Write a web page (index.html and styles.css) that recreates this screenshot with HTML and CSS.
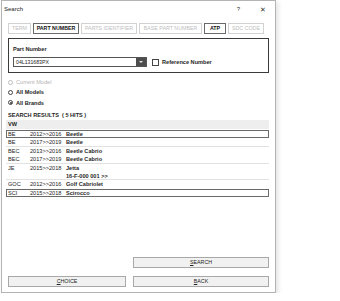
FILE: index.html
```html
<!DOCTYPE html>
<html lang="en">
<head>
    <meta charset="UTF-8">
    <title>Search</title>
    <link rel="stylesheet" href="styles.css">
</head>
<body>
    <div class="dialog">
        <div class="titlebar">
            <span class="title">Search</span>
            <span class="title-btn help">?</span>
            <span class="title-btn close">&#x2715;</span>
        </div>

        <div class="content">
            <div class="tabs">
                <div class="tab w-term">TERM</div>
                <div class="tab active w-pn">PART NUMBER</div>
                <div class="tab w-pi">PARTS IDENTIFIER</div>
                <div class="tab w-bpn">BASE PART NUMBER</div>
                <div class="tab active w-atp">ATP</div>
                <div class="tab w-sdc">SDC CODE</div>
            </div>

            <div class="group">
                <div class="group-label">Part Number</div>
                <div class="input-row">
                    <div class="combo">
                        <span class="combo-text">04L131683PX</span>
                        <span class="combo-btn"></span>
                    </div>
                    <span class="checkbox"></span>
                    <span class="check-label">Reference Number</span>
                </div>
            </div>

            <div class="radios">
                <div class="radio disabled"><span class="dot"></span>Current Model</div>
                <div class="radio"><span class="dot"></span>All Models</div>
                <div class="radio"><span class="dot checked"></span>All Brands</div>
            </div>

            <div class="results-label">SEARCH RESULTS &nbsp;( 5 HITS )</div>

            <div class="results">
                <div class="brand">VW</div>
                <div class="rows">
                    <div class="row selected"><span>BE</span><span>2012&gt;&gt;2016</span><span>Beetle</span></div>
                    <div class="row group-end"><span>BE</span><span>2017&gt;&gt;2019</span><span>Beetle</span></div>
                    <div class="row"><span>BEC</span><span>2013&gt;&gt;2016</span><span>Beetle Cabrio</span></div>
                    <div class="row group-end"><span>BEC</span><span>2017&gt;&gt;2019</span><span>Beetle Cabrio</span></div>
                    <div class="row group-end"><span>JE</span><span>2015&gt;&gt;2018</span><span>Jetta<br>16-F-000 001 &gt;&gt;</span></div>
                    <div class="row"><span>GOC</span><span>2012&gt;&gt;2016</span><span>Golf Cabriolet</span></div>
                    <div class="row selected"><span>SCI</span><span>2015&gt;&gt;2018</span><span>Scirocco</span></div>
                </div>
            </div>

            <div class="buttons">
                <div class="button wide"><u>S</u>EARCH</div>
                <div class="button-row">
                    <div class="button"><u>C</u>HOICE</div>
                    <div class="button"><u>B</u>ACK</div>
                </div>
            </div>
        </div>
    </div>
</body>
</html>
```

FILE: styles.css
```css
body {
    margin: 0;
    background-color: #ffffff;
    font-family: "Liberation Sans", Arial, sans-serif;
    font-size: 5.6px;
    color: #1e1e1e;
}

.dialog {
    margin-left: 1px;
    width: 275px;
    height: 293px;
    box-sizing: border-box;
    border: 1px solid #b4b4b4;
    background-color: #ffffff;
    box-shadow: 2px 2px 5px rgba(0, 0, 0, 0.12);
    display: flex;
    flex-direction: column;
}

.titlebar {
    height: 22px;
    display: flex;
    align-items: flex-start;
    line-height: 17px;
    font-size: 6px;
}

.title {
    flex: 1;
    padding-left: 2px;
}

.title-btn {
    width: 25px;
    text-align: center;
    color: #333;
}

.close {
    width: 24px;
    font-size: 6.5px;
}

.content {
    flex: 1;
    padding: 0 6px 5px 6px;
    display: flex;
    flex-direction: column;
}

/* tabs */
.tabs {
    display: flex;
    gap: 2px;
    height: 11px;
}

.tab {
    box-sizing: border-box;
    border: 1px solid #d2d2d2;
    color: #bdbdbd;
    font-size: 5.3px;
    line-height: 9px;
    text-align: center;
    white-space: nowrap;
    overflow: hidden;
}

.tab.active {
    border-color: #6a6a6a;
    color: #111;
    font-weight: bold;
}

.w-term { width: 23px; }
.w-pn { width: 46px; }
.w-pi { width: 56px; }
.w-bpn { width: 63px; }
.w-atp { width: 22px; }
.w-sdc { width: 36px; }

/* part number group */
.group {
    margin-top: 4px;
    height: 35px;
    box-sizing: border-box;
    border: 1px solid #3a3a3a;
    padding: 6px 4px 0 4px;
}

.group-label {
    font-weight: bold;
    line-height: 8px;
}

.input-row {
    margin-top: 4px;
    display: flex;
    align-items: center;
    height: 10px;
}

.combo {
    width: 134px;
    height: 10px;
    box-sizing: border-box;
    border: 1px solid #555;
    display: flex;
}

.combo-text {
    flex: 1;
    padding-left: 2px;
    line-height: 8px;
    font-size: 5.2px;
}

.combo-btn {
    width: 10px;
    background-color: #4d4d4d;
    display: flex;
    align-items: center;
    justify-content: center;
}

.combo-btn::after {
    content: "";
    border-left: 2px solid transparent;
    border-right: 2px solid transparent;
    border-top: 2px solid #e6e6e6;
}

.checkbox {
    margin-left: 5px;
    width: 7px;
    height: 7px;
    box-sizing: border-box;
    border: 1px solid #444;
}

.check-label {
    margin-left: 3px;
    font-weight: bold;
}

/* radios */
.radios {
    margin-top: 4px;
}

.radio {
    height: 10.3px;
    display: flex;
    align-items: center;
    font-weight: bold;
}

.radio.disabled {
    color: #b4b4b4;
    font-weight: normal;
}

.dot {
    width: 5px;
    height: 5px;
    box-sizing: border-box;
    border: 1px solid #444;
    border-radius: 50%;
    margin-right: 3px;
    display: flex;
    align-items: center;
    justify-content: center;
}

.disabled .dot {
    border-color: #bbb;
}

.dot.checked::after {
    content: "";
    width: 2px;
    height: 2px;
    border-radius: 50%;
    background-color: #333;
}

.results-label {
    margin-top: 3px;
    line-height: 8px;
    font-weight: bold;
}

/* results table */
.results {
    margin-top: 1px;
    margin-left: -2px;
}

.brand {
    height: 9px;
    line-height: 9px;
    padding-left: 2px;
    background-color: #eeeeee;
    font-weight: bold;
}

.rows {
    margin-top: 1px;
}

.row {
    display: grid;
    grid-template-columns: 22px 36px 1fr;
    padding-left: 2px;
    line-height: 8.4px;
    white-space: nowrap;
}

.row.selected {
    box-shadow: inset 0 0 0 1px #6a6a6a;
}

.row.group-end {
    box-shadow: inset 0 -1px 0 #e2e2e2;
}

.row span:nth-child(3) {
    font-weight: bold;
    color: #2a2a2a;
}

/* buttons */
.buttons {
    margin-top: auto;
    display: flex;
    flex-direction: column;
    gap: 8px;
}

.button-row {
    display: grid;
    grid-template-columns: 118px 136px;
    gap: 7px;
}

.button {
    height: 11px;
    box-sizing: border-box;
    border: 1px solid #a8a8a8;
    background-color: #f1f1f1;
    text-align: center;
    line-height: 9px;
    font-size: 5.3px;
    color: #222;
}

.button.wide {
    width: 136px;
    margin-left: auto;
}
```
